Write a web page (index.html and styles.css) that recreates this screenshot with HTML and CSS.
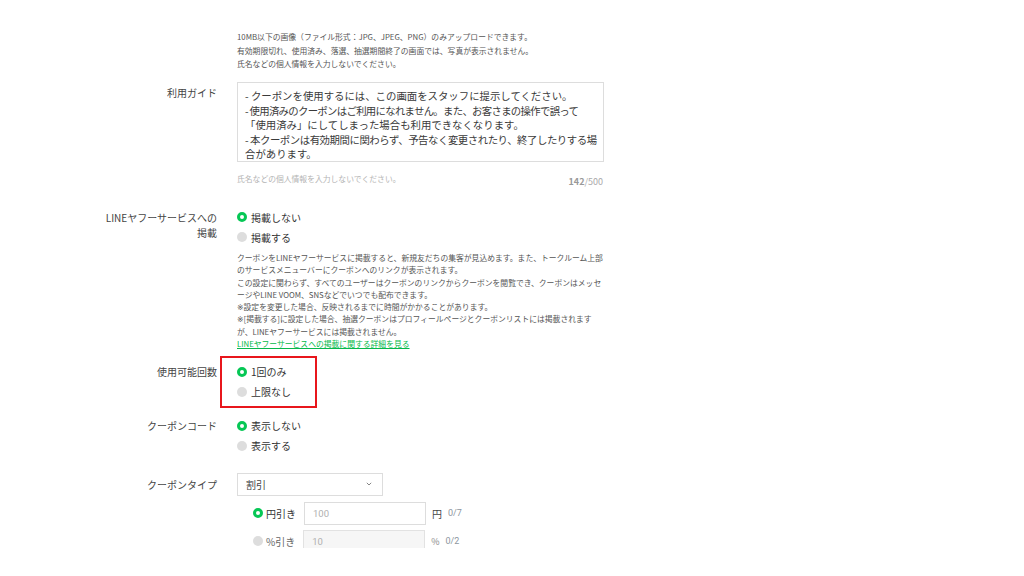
FILE: index.html
```html
<!DOCTYPE html>
<html lang="ja">
<head>
<meta charset="utf-8">
<title>クーポン設定</title>
<link rel="stylesheet" href="styles.css">
</head>
<body>
<div class="page">
  <div class="notes">
    <span class="line">10MB以下の画像（ファイル形式：JPG、JPEG、PNG）のみアップロードできます。</span>
    <span class="line">有効期限切れ、使用済み、落選、抽選期間終了の画面では、写真が表示されません。</span>
    <span class="line">氏名などの個人情報を入力しないでください。</span>
  </div>

  <div class="row row-guide">
    <div class="label label-guide">利用ガイド</div>
    <div class="field">
      <div class="textarea">
        <span class="line">- クーポンを使用するには、この画面をスタッフに提示してください。</span>
        <span class="line tight-a">- 使用済みのクーポンはご利用になれません。また、お客さまの操作で誤って</span>
        <span class="line">「使用済み」にしてしまった場合も利用できなくなります。</span>
        <span class="line tight-b">- 本クーポンは有効期間に関わらず、予告なく変更されたり、終了したりする場</span>
        <span class="line">合があります。</span>
      </div>
      <div class="helper-row">
        <span class="helper">氏名などの個人情報を入力しないでください。</span>
        <span class="counter"><b>142</b>/500</span>
      </div>
    </div>
  </div>

  <div class="row row-line">
    <div class="label label-two">LINEヤフーサービスへの<br>掲載</div>
    <div class="field">
      <div class="radio-group">
        <div class="radio"><span class="dot on"></span><span class="rlabel">掲載しない</span></div>
        <div class="radio"><span class="dot"></span><span class="rlabel">掲載する</span></div>
      </div>
      <div class="desc">
        <span class="line">クーポンをLINEヤフーサービスに掲載すると、新規友だちの集客が見込めます。また、トークルーム上部</span>
        <span class="line">のサービスメニューバーにクーポンへのリンクが表示されます。</span>
        <span class="line">この設定に関わらず、すべてのユーザーはクーポンのリンクからクーポンを閲覧でき、クーポンはメッセ</span>
        <span class="line">ージやLINE VOOM、SNSなどでいつでも配布できます。</span>
        <span class="line"><span class="mark">※</span>設定を変更した場合、反映されるまでに時間がかかることがあります。</span>
        <span class="line"><span class="mark">※</span>[掲載する]に設定した場合、抽選クーポンはプロフィールページとクーポンリストには掲載されます</span>
        <span class="line">が、LINEヤフーサービスには掲載されません。</span>
        <a class="line link" href="#">LINEヤフーサービスへの掲載に関する詳細を見る</a>
      </div>
    </div>
  </div>

  <div class="row row-count">
    <div class="label">使用可能回数</div>
    <div class="field">
      <div class="radio-group highlighted">
        <div class="radio"><span class="dot on"></span><span class="rlabel">1回のみ</span></div>
        <div class="radio"><span class="dot"></span><span class="rlabel">上限なし</span></div>
        <span class="highlight-box"></span>
      </div>
    </div>
  </div>

  <div class="row row-code">
    <div class="label">クーポンコード</div>
    <div class="field">
      <div class="radio-group">
        <div class="radio"><span class="dot on"></span><span class="rlabel">表示しない</span></div>
        <div class="radio"><span class="dot"></span><span class="rlabel">表示する</span></div>
      </div>
    </div>
  </div>

  <div class="row row-type">
    <div class="label label-type">クーポンタイプ</div>
    <div class="field">
      <div class="select">
        <span>割引</span>
        <svg class="chev" width="6" height="4" viewBox="0 0 6 4"><path d="M0.8 0.8 L3 3 L5.2 0.8" fill="none" stroke="#777" stroke-width="0.9"/></svg>
      </div>
      <div class="discounts">
        <div class="disc">
          <span class="dot on"></span><span class="dlabel">円引き</span>
          <span class="input">100</span>
          <span class="unit">円</span><span class="count">0/7</span>
        </div>
        <div class="disc disabled">
          <span class="dot"></span><span class="dlabel">%引き</span>
          <span class="input">10</span>
          <span class="unit">%</span><span class="count">0/2</span>
        </div>
      </div>
    </div>
  </div>
</div>
</body>
</html>
```

FILE: styles.css
```css
html, body {
  margin: 0;
  padding: 0;
  background: #ffffff;
}

body {
  font-family: "Noto Sans CJK JP", "Noto Sans", "Liberation Sans", sans-serif;
  font-variant-emoji: text;
  color: #333333;
}

.page {
  height: 548px;
  overflow: hidden;
  box-sizing: border-box;
  padding: 30px 0 0 100px;
}

.line {
  display: block;
  white-space: nowrap;
}

.notes {
  margin-left: 137px;
  font-size: 7.8px;
  line-height: 13.5px;
  color: #555555;
}

.row {
  display: grid;
  grid-template-columns: 117px 367px;
  column-gap: 20px;
  align-items: start;
}

.label {
  text-align: right;
  font-size: 10px;
  line-height: 20px;
  color: #444444;
  white-space: nowrap;
}

.row-guide {
  margin-top: 11.5px;
}

.label-guide {
  line-height: 14px;
  padding-top: 4px;
}

.textarea {
  box-sizing: border-box;
  height: 80px;
  border: 1px solid #dddddd;
  padding: 6px 7px;
  font-size: 10.4px;
  line-height: 14.5px;
  color: #3a3a3a;
}

.tight-a {
  letter-spacing: -0.7px;
}

.tight-b {
  letter-spacing: -0.45px;
}

.helper-row {
  display: flex;
  justify-content: space-between;
  align-items: flex-end;
  margin-top: 9px;
  height: 14px;
}

.helper {
  font-size: 7.8px;
  line-height: 12px;
  color: #b4b4b4;
}

.counter {
  font-size: 9px;
  line-height: 12px;
  color: #aaaaaa;
  margin-bottom: -3px;
  margin-right: 1px;
}

.counter b {
  color: #999999;
  font-weight: 700;
}

.row-line {
  margin-top: 22px;
}

.label-two {
  line-height: 15px;
  padding-top: 2.5px;
}

.radio-group {
  position: relative;
  display: flex;
  flex-direction: column;
  width: max-content;
}

.radio {
  display: flex;
  align-items: center;
  height: 20px;
}

.dot {
  box-sizing: border-box;
  width: 10px;
  height: 10px;
  border-radius: 50%;
  background: #dddddd;
  flex: none;
}

.dot.on {
  background: #ffffff;
  border: 3px solid #06c755;
}

.rlabel {
  margin-left: 4px;
  font-size: 10px;
  color: #333333;
  white-space: nowrap;
}

.desc {
  margin-top: 5px;
  font-size: 7.8px;
  line-height: 12.3px;
  color: #555555;
}

.desc .line {
  height: 12.3px;
  overflow: visible;
}

.mark {
  font-family: "DejaVu Sans", "Noto Sans CJK JP", sans-serif;
  line-height: 1;
  color: #555555;
}

.link {
  color: #06b94a;
  text-decoration: underline;
  width: max-content;
}

.row-count {
  margin-top: 11.6px;
}

.highlight-box {
  position: absolute;
  top: -6px;
  left: -17px;
  width: 97px;
  height: 52px;
  box-sizing: border-box;
  border: 2px solid #e8161c;
}

.row-code {
  margin-top: 14px;
}

.row-type {
  margin-top: 17px;
}

.label-type {
  line-height: 23px;
}

.select {
  box-sizing: border-box;
  width: 146px;
  height: 23px;
  border: 1px solid #dddddd;
  display: flex;
  align-items: center;
  justify-content: space-between;
  padding: 0 10px 0 8px;
  font-size: 10px;
  color: #444444;
}

.chev {
  display: block;
}

.discounts {
  margin-top: 6px;
  padding-left: 16px;
}

.disc {
  display: flex;
  align-items: center;
  height: 23px;
}

.disc + .disc {
  margin-top: 5px;
}

.dlabel {
  margin-left: 3px;
  font-size: 10px;
  color: #333333;
  white-space: nowrap;
}

.input {
  box-sizing: border-box;
  width: 122px;
  height: 23px;
  margin-left: 8px;
  border: 1px solid #dddddd;
  padding: 0 8px;
  display: flex;
  align-items: center;
  font-family: "Roboto", "Noto Sans", sans-serif;
  font-size: 9.5px;
  color: #b0b0b0;
}

.disabled .input {
  background: #f6f6f6;
  border-color: #e2e2e2;
}

.disabled .dlabel {
  color: #666666;
}

.unit {
  margin-left: 6px;
  font-size: 10px;
  color: #444444;
}

.disabled .unit {
  color: #888888;
  font-size: 9px;
}

.count {
  margin-left: 6px;
  font-family: "Roboto", "Noto Sans", sans-serif;
  font-size: 9px;
  color: #8d96a0;
}
```
